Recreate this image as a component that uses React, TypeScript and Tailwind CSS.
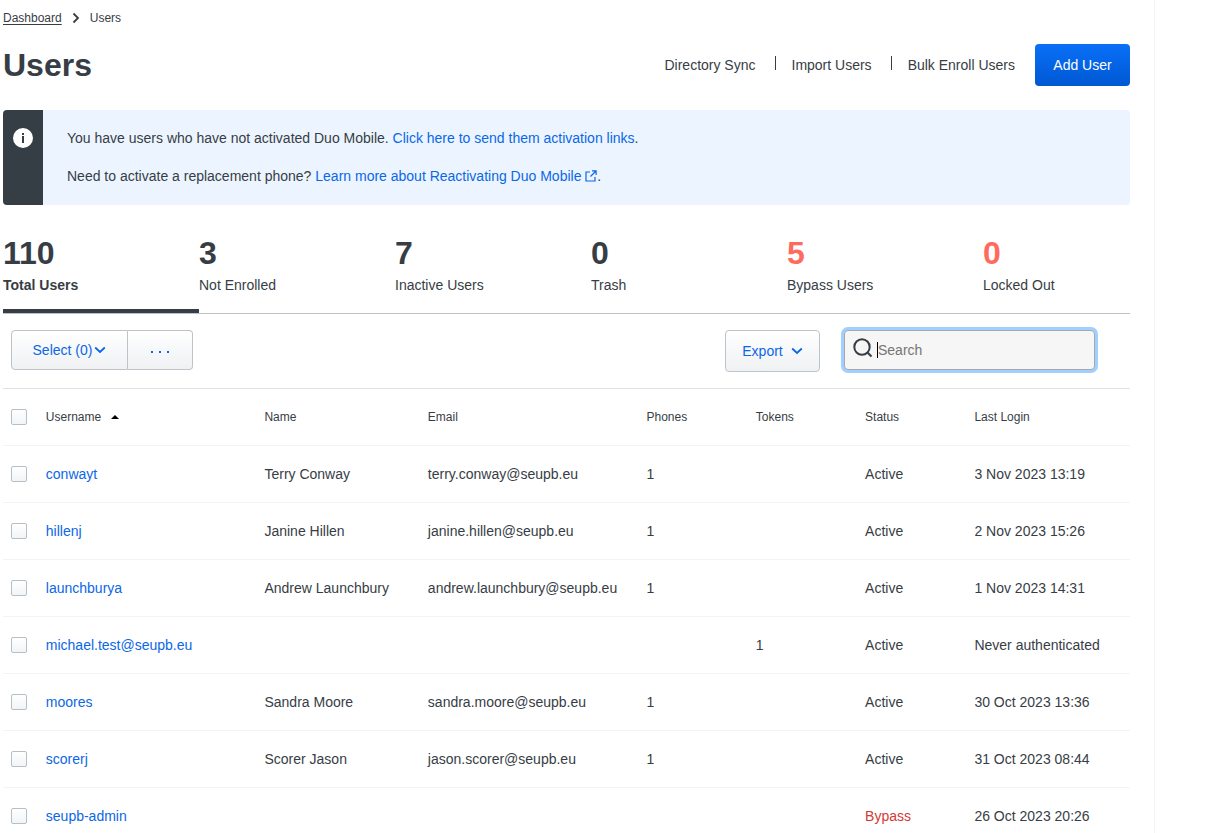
import React from "react";

type User = {
  username: string;
  name: string;
  email: string;
  phones: string;
  tokens: string;
  status: "Active" | "Bypass";
  lastLogin: string;
};

const users: User[] = [
  { username: "conwayt", name: "Terry Conway", email: "terry.conway@seupb.eu", phones: "1", tokens: "", status: "Active", lastLogin: "3 Nov 2023 13:19" },
  { username: "hillenj", name: "Janine Hillen", email: "janine.hillen@seupb.eu", phones: "1", tokens: "", status: "Active", lastLogin: "2 Nov 2023 15:26" },
  { username: "launchburya", name: "Andrew Launchbury", email: "andrew.launchbury@seupb.eu", phones: "1", tokens: "", status: "Active", lastLogin: "1 Nov 2023 14:31" },
  { username: "michael.test@seupb.eu", name: "", email: "", phones: "", tokens: "1", status: "Active", lastLogin: "Never authenticated" },
  { username: "moores", name: "Sandra Moore", email: "sandra.moore@seupb.eu", phones: "1", tokens: "", status: "Active", lastLogin: "30 Oct 2023 13:36" },
  { username: "scorerj", name: "Scorer Jason", email: "jason.scorer@seupb.eu", phones: "1", tokens: "", status: "Active", lastLogin: "31 Oct 2023 08:44" },
  { username: "seupb-admin", name: "", email: "", phones: "", tokens: "", status: "Bypass", lastLogin: "26 Oct 2023 20:26" },
];

const stats = [
  { value: "110", label: "Total Users", active: true, alert: false },
  { value: "3", label: "Not Enrolled", active: false, alert: false },
  { value: "7", label: "Inactive Users", active: false, alert: false },
  { value: "0", label: "Trash", active: false, alert: false },
  { value: "5", label: "Bypass Users", active: false, alert: true },
  { value: "0", label: "Locked Out", active: false, alert: true },
];

const columns = ["Name", "Email", "Phones", "Tokens", "Status", "Last Login"];

function ChevronDown() {
  return (
    <svg viewBox="0 0 12 8" className="h-2 w-3" fill="none" stroke="currentColor" strokeWidth="1.8" aria-hidden="true">
      <path d="M1.200 1.500 6 6l4.800-4.500" />
    </svg>
  );
}

function Checkbox({ label }: { label: string }) {
  return (
    <input
      type="checkbox"
      aria-label={label}
      className="block size-4 appearance-none rounded-xs border border-[#b4bfc8] bg-linear-to-b from-white to-[#f2f4f6] checked:bg-[#0a6cf0]"
    />
  );
}

export default function App() {
  return (
    <div className="flex min-h-screen bg-white font-['Liberation_Sans',Arial,sans-serif] text-sm text-[#373d45]">
      <main className="min-w-0 flex-1 border-r border-[#f3f4f5] pr-6 pl-[3px]">
        <nav aria-label="Breadcrumb" className="flex items-center pt-2 text-xs leading-5">
          <a href="#dashboard" className="underline underline-offset-2">Dashboard</a>
          <svg viewBox="0 0 8 12" className="mx-2.5 h-3 w-2" fill="none" stroke="currentColor" strokeWidth="1.8" aria-hidden="true">
            <path d="M1.500 1.500 6 6l-4.500 4.500" />
          </svg>
          <span>Users</span>
        </nav>

        <header className="mt-4 flex items-center justify-between">
          <h1 className="text-[32px] leading-10 font-bold">Users</h1>
          <div className="flex items-center">
            <ul className="flex items-center">
              <li><a href="#directory-sync">Directory Sync</a></li>
              <li className="ml-[19px] flex items-center"><span className="mr-4 mb-1 h-3.5 w-px bg-[#373d45]" /><a href="#import">Import Users</a></li>
              <li className="ml-[19px] flex items-center"><span className="mr-4 mb-1 h-3.5 w-px bg-[#373d45]" /><a href="#bulk-enroll">Bulk Enroll Users</a></li>
            </ul>
            <button type="button" className="ml-5 h-[42px] w-[95px] rounded-sm bg-linear-to-b from-[#0a70f8] to-[#0058d2] text-white">
              Add User
            </button>
          </div>
        </header>

        <section aria-label="Notice" className="mt-6 flex overflow-hidden rounded-sm bg-[#ecf5ff]">
          <div className="flex w-10 shrink-0 justify-center bg-[#363e45] pt-[18px]">
            <svg viewBox="0 0 20 20" className="size-5" aria-hidden="true">
              <circle cx="10" cy="10" r="10" fill="#fff" />
              <rect x="9" y="5" width="2" height="2" fill="#363e45" />
              <rect x="9" y="8" width="2" height="7" fill="#363e45" />
            </svg>
          </div>
          <div className="space-y-[18px] pt-[18px] pb-[19px] pl-6 leading-5">
            <p>You have users who have not activated Duo Mobile. <a href="#activate" className="text-[#0b67e6]">Click here to send them activation links</a>.</p>
            <p>
              Need to activate a replacement phone?{" "}
              <a href="#learn-more" className="text-[#0b67e6]">
                Learn more about Reactivating Duo Mobile{" "}
                <svg viewBox="0 0 12 12" className="inline size-3 align-[-1px]" fill="none" stroke="currentColor" aria-hidden="true">
                  <path d="M5 2H1v9h9V7M7 .9h4.100V5M11 1 5.500 6.500" strokeWidth="1.200" />
                </svg>
              </a>.
            </p>
          </div>
        </section>

        <nav aria-label="User filters" className="mt-7 grid grid-cols-[repeat(5,4fr)_3fr] border-b border-[#bfc2c5]">
          {stats.map((s) => (
            <a
              key={s.label}
              href={"#" + s.label}
              aria-current={s.active ? "page" : undefined}
              className={s.active ? "block h-20 border-b-4 border-[#373d45] font-bold" : "block h-20"}
            >
              <span className={s.alert ? "block text-[32px] leading-10 font-bold text-[#ff6a5e]" : "block text-[32px] leading-10 font-bold"}>{s.value}</span>
              <span className="mt-0.5 block leading-5">{s.label}</span>
            </a>
          ))}
        </nav>

        <div className="flex items-start py-4 pr-[35px] pl-2">
          <div className="flex h-10 text-[#0b67e6]">
            <button type="button" className="flex w-[117px] items-center justify-center gap-0.5 rounded-l-sm border border-[#bec3ca] bg-linear-to-b from-white to-[#eff1f3]">
              Select (0)<ChevronDown />
            </button>
            <button type="button" aria-label="More actions" className="flex w-[65px] items-center justify-center gap-1.5 rounded-r-sm border border-l-0 border-[#bec3ca] bg-linear-to-b from-white to-[#eff1f3]">
              <span className="mt-1 size-0.5 bg-current" />
              <span className="mt-1 size-0.5 bg-current" />
              <span className="mt-1 size-0.5 bg-current" />
            </button>
          </div>
          <button type="button" className="ml-auto flex h-[42px] w-[95px] items-center justify-center gap-2 rounded-sm border border-[#bec3ca] bg-linear-to-b from-white to-[#eff1f3] text-[#0b67e6]">
            Export <ChevronDown />
          </button>
          <label className="ml-6 flex h-10 w-[251px] items-center rounded-sm border border-[#a5a9ad] bg-[#f6f6f6] pl-2 ring-3 ring-[#a1cfff]">
            <svg viewBox="0 0 20 20" className="mb-1 size-5 shrink-0" fill="none" stroke="currentColor" strokeWidth="2" aria-hidden="true">
              <circle cx="9" cy="9" r="7.700" />
              <path d="m14.200 14.200 4.300 4.300" />
            </svg>
            <span className="ml-1 h-4 w-px bg-black" />
            <input type="text" aria-label="Search" placeholder="Search" className="min-w-0 flex-1 bg-transparent outline-none placeholder:text-[#757575]" />
          </label>
        </div>

        <table className="w-full table-fixed border-collapse border-t border-[#dfe1e6] text-left">
          <colgroup>
            <col className="w-[3.8%]" />
            <col className="w-[19.4%]" />
            <col className="w-[14.5%]" />
            <col className="w-[19.4%]" />
            <col className="w-[9.7%]" />
            <col className="w-[9.7%]" />
            <col className="w-[9.7%]" />
            <col />
          </colgroup>
          <thead>
            <tr className="h-[57px] border-b border-[#f3f4f5] text-xs">
              <th className="pl-2"><Checkbox label="Select all users" /></th>
              <th aria-sort="ascending" className="font-normal">
                <button type="button" className="flex items-center gap-2.5">
                  Username
                  <svg viewBox="0 0 8 4" className="h-1 w-2" aria-hidden="true"><path d="M0 4 4 0l4 4z" fill="#000" /></svg>
                </button>
              </th>
              {columns.map((c) => (
                <th key={c} className="font-normal">{c}</th>
              ))}
            </tr>
          </thead>
          <tbody>
            {users.map((u) => (
              <tr key={u.username} className="h-[57px] border-b border-[#f3f4f5] whitespace-nowrap">
                <td className="pl-2"><Checkbox label={"Select " + u.username} /></td>
                <td><a href={"#" + u.username} className="text-[#0b67e6]">{u.username}</a></td>
                <td>{u.name}</td>
                <td>{u.email}</td>
                <td>{u.phones}</td>
                <td>{u.tokens}</td>
                <td className={u.status === "Bypass" ? "text-[#d33a35]" : ""}>{u.status}</td>
                <td>{u.lastLogin}</td>
              </tr>
            ))}
          </tbody>
        </table>
      </main>
      <div className="w-[57px] shrink-0" />
    </div>
  );
}
